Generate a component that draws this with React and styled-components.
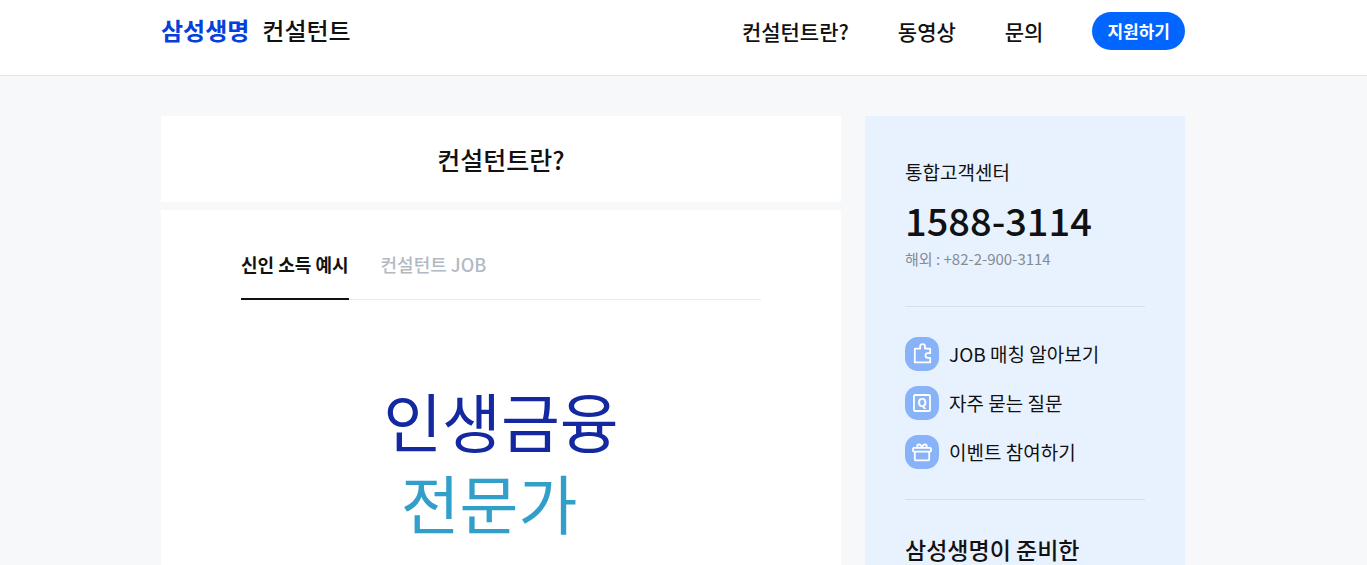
import React from "react";
import styled, { createGlobalStyle } from "styled-components";

const GlobalStyle = createGlobalStyle`
  *, *::before, *::after { box-sizing: border-box; }
  body {
    margin: 0;
    background: #f7f8fa;
    color: #111;
    font-family: "Noto Sans CJK KR", "Noto Sans", sans-serif;
  }
  h1, h2, p, ul { margin: 0; padding: 0; }
  ul { list-style: none; }
  a { color: inherit; text-decoration: none; }
  button { font-family: inherit; cursor: pointer; }
`;

const Header = styled.header`
  background: #fff;
  border-bottom: 1px solid #e4e6ea;
  padding-right: 21px;
`;

const HeaderInner = styled.div`
  display: flex;
  justify-content: space-between;
  max-width: 1024px;
  height: 75px;
  margin: 0 auto;
  padding-top: 12px;
`;

const Brand = styled.div`
  display: flex;
  gap: 13px;
  height: 36px;
  font-size: 24px;
  line-height: 36px;
  font-weight: 500;
`;

const BrandLogo = styled.a`
  color: #0540dc;
  font-weight: 700;
`;

const Nav = styled.nav`
  display: flex;
  align-items: center;
  gap: 49px;
  height: 38px;
`;

const NavLink = styled.a`
  font-size: 21px;
  line-height: 40px;
  font-weight: 500;
`;

const ApplyButton = styled.button`
  height: 38px;
  padding: 0 15px;
  border: 0;
  border-radius: 19px;
  background: #0066ff;
  color: #fff;
  font-size: 17px;
  line-height: 38px;
  font-weight: 700;
`;

const Page = styled.div`
  padding: 40px 21px 0 0;
`;

const Columns = styled.div`
  display: flex;
  gap: 24px;
  max-width: 1024px;
  min-height: calc(100vh - 116px);
  margin: 0 auto;
`;

const Main = styled.main`
  display: flex;
  flex: 1;
  flex-direction: column;
  gap: 8px;
`;

const TitleCard = styled.section`
  padding: 23px 0;
  background: #fff;
  text-align: center;
`;

const Title = styled.h1`
  font-size: 25px;
  line-height: 40px;
  font-weight: 500;
`;

const ContentCard = styled.section`
  flex: 1;
  padding: 32px 80px 0;
  background: #fff;
`;

const Tabs = styled.div`
  display: flex;
  gap: 32px;
  border-bottom: 1px solid #e9eaec;
`;

const Tab = styled.button`
  height: 58px;
  margin-bottom: -1px;
  padding: 0 0 12px;
  border: 0;
  border-bottom: 2px solid ${(p) => (p.$active ? "#111" : "transparent")};
  background: none;
  color: ${(p) => (p.$active ? "#111" : "#b3b9c2")};
  font-size: 18px;
  line-height: 44px;
  font-weight: ${(p) => (p.$active ? 700 : 500)};
`;

const Slogan = styled.h2`
  padding-top: 78px;
  color: #1428a0;
  font-size: 64px;
  line-height: 82px;
  font-weight: 400;
  text-align: center;
`;

const SloganAccent = styled.span`
  display: block;
  padding-right: 24px;
  color: #329fca;
`;

const Aside = styled.aside`
  flex: 0 0 320px;
  padding: 40px 40px 0;
  background: #e8f2ff;
`;

const Contact = styled.section`
  padding-bottom: 36px;
  border-bottom: 1px solid #d3dfed;
`;

const ContactLabel = styled.h2`
  font-size: 19px;
  line-height: 32px;
  font-weight: 400;
`;

const Phone = styled.p`
  font-size: 38px;
  line-height: 64px;
  font-weight: 500;
`;

const Overseas = styled.p`
  margin-top: -4px;
  color: #868b94;
  font-size: 15px;
  line-height: 22px;
`;

const LinkList = styled.ul`
  display: flex;
  flex-direction: column;
  gap: 15px;
  padding: 30px 0;
  border-bottom: 1px solid #d3dfed;
`;

const QuickLink = styled.a`
  display: flex;
  align-items: center;
  gap: 10px;
  font-size: 19px;
  line-height: 34px;
`;

const IconBadge = styled.span`
  display: flex;
  width: 34px;
  height: 34px;
  border-radius: 13px;
  background: #88b3f8;
`;

const Promo = styled.h2`
  padding-top: 32px;
  font-size: 23px;
  line-height: 34px;
  font-weight: 500;
`;

const Icon = ({ children }) => (
  <IconBadge>
    <svg
      width="34"
      height="34"
      viewBox="0 0 34 34"
      fill="none"
      stroke="#fff"
      strokeWidth="1.8"
      strokeLinejoin="round"
      aria-hidden="true"
    >
      {children}
    </svg>
  </IconBadge>
);

const quickLinks = [
  {
    label: "JOB 매칭 알아보기",
    icon: (
      <path d="M9.8 11.6h5.4V9.6a2.4 2.4 0 0 1 4.8 0v2h5.2v4.6h-2.4a2.3 2.3 0 0 0 0 4.6h2.4v4.6H9.8z" />
    ),
  },
  {
    label: "자주 묻는 질문",
    icon: (
      <>
        <rect x="9" y="9" width="16" height="16" rx="1" />
        <text
          x="17"
          y="21"
          textAnchor="middle"
          fill="#fff"
          stroke="none"
          fontSize="12"
          fontFamily="Open Sans, sans-serif"
          fontWeight="700"
        >
          Q
        </text>
      </>
    ),
  },
  {
    label: "이벤트 참여하기",
    icon: (
      <>
        <rect x="8" y="12.8" width="18" height="3.8" rx="1" />
        <path d="M9.8 16.6v7.6a1.2 1.2 0 0 0 1.2 1.2h12a1.2 1.2 0 0 0 1.2-1.2v-7.6" />
        <path d="M17 12.6c-.6-2.2-1.8-3.3-3.4-3.1-1.8.3-1.8 2.4-.4 3.1M17 12.6c.6-2.2 1.8-3.3 3.4-3.1 1.8.3 1.8 2.4.4 3.1" />
      </>
    ),
  },
];

export default function App() {
  return (
    <>
      <GlobalStyle />
      <Header>
        <HeaderInner>
          <Brand>
            <BrandLogo href="#home">삼성생명</BrandLogo>
            <a href="#consultant">컨설턴트</a>
          </Brand>
          <Nav>
            <NavLink href="#about">컨설턴트란?</NavLink>
            <NavLink href="#video">동영상</NavLink>
            <NavLink href="#contact">문의</NavLink>
            <ApplyButton type="button">지원하기</ApplyButton>
          </Nav>
        </HeaderInner>
      </Header>
      <Page>
        <Columns>
          <Main>
            <TitleCard>
              <Title>컨설턴트란?</Title>
            </TitleCard>
            <ContentCard>
              <Tabs role="tablist">
                <Tab type="button" role="tab" aria-selected="true" $active>
                  신인 소득 예시
                </Tab>
                <Tab type="button" role="tab" aria-selected="false">
                  컨설턴트 JOB
                </Tab>
              </Tabs>
              <Slogan>
                인생금융
                <SloganAccent>전문가</SloganAccent>
              </Slogan>
            </ContentCard>
          </Main>
          <Aside>
            <Contact>
              <ContactLabel>통합고객센터</ContactLabel>
              <Phone>1588-3114</Phone>
              <Overseas>해외 : +82-2-900-3114</Overseas>
            </Contact>
            <LinkList>
              {quickLinks.map(({ label, icon }) => (
                <li key={label}>
                  <QuickLink href="#quick">
                    <Icon>{icon}</Icon>
                    {label}
                  </QuickLink>
                </li>
              ))}
            </LinkList>
            <Promo>삼성생명이 준비한</Promo>
          </Aside>
        </Columns>
      </Page>
    </>
  );
}
